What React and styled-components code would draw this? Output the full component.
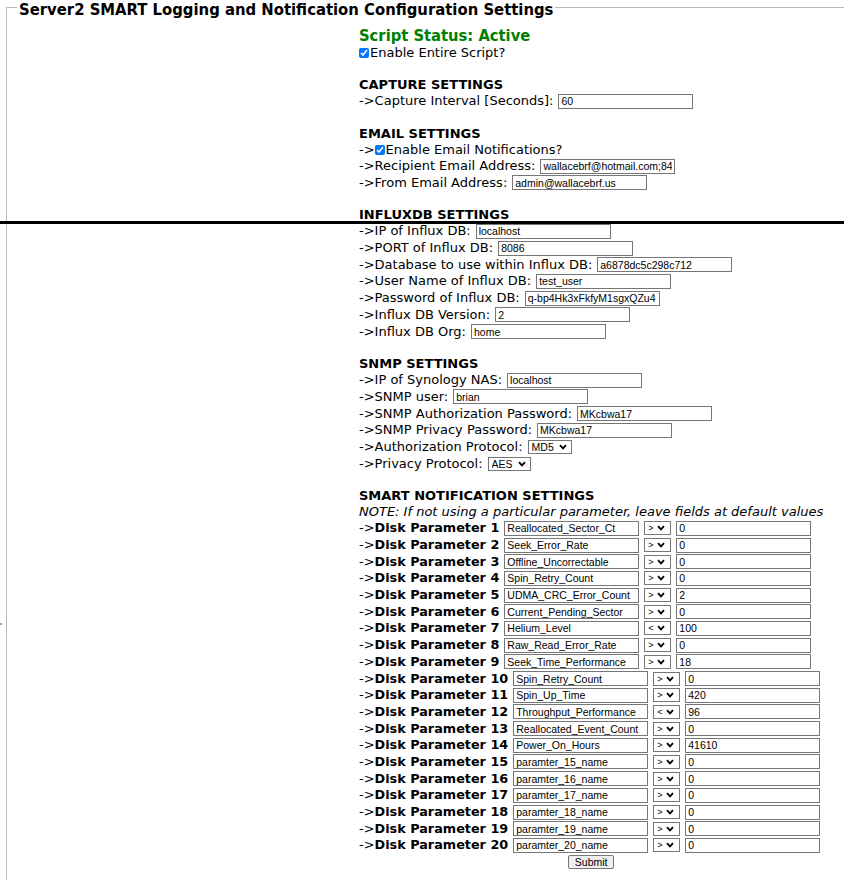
import React from 'react';
import styled, { createGlobalStyle } from 'styled-components';

const GlobalStyle = createGlobalStyle`
    html, body {
        margin: 0;
        padding: 0;
        overflow: hidden;
        background: #fff;
    }
    body {
        font-family: 'DejaVu Sans', Verdana, sans-serif;
        font-size: 13px;
        color: #000;
    }
`;

const Page = styled.div`
    position: relative;
    width: 844px;
    height: 880px;
    overflow: hidden;
`;
const Frame = styled.fieldset`
    margin: -4px -20px 0 6px;
    padding: 0 0 20px 0;
    border: 1px solid #b8b8b8;
    min-width: 0;
`;
const Legend = styled.legend`
    margin-left: 10px;
    padding: 6px 2px 0;
    font-family: 'DejaVu Sans Condensed', 'DejaVu Sans', sans-serif;
    font-size: 16.5px;
    line-height: 16px;
    font-weight: bold;
    white-space: nowrap;
`;
const Content = styled.div`
    display: flex;
    flex-direction: column;
    width: fit-content;
    margin-left: 352px;
`;
const Status = styled.div`
    margin-top: 8px;
    font-family: 'DejaVu Sans Condensed', 'DejaVu Sans', sans-serif;
    font-size: 16.4px;
    line-height: 19px;
    font-weight: bold;
    color: #008000;
`;
const Line = styled.div`
    display: flex;
    align-items: center;
    height: 16px;
    line-height: 16px;
    white-space: nowrap;
    margin-top: ${(props) => (props.$gap ? '16px' : '0')};
`;
const Heading = styled(Line)`
    font-weight: bold;
`;
const Note = styled(Line)`
    font-style: italic;
`;
const Row = styled.div`
    display: flex;
    align-items: center;
    gap: 5px;
    height: 16.7px;
    line-height: 16px;
    white-space: nowrap;
`;
const Label = styled.span``;
const Strong = styled.b`
    font-size: 12.8px;
`;
const Check = styled.input`
    width: 10px;
    height: 10px;
    margin: 0 1px 0 0;
`;
const TextInput = styled.input`
    box-sizing: border-box;
    width: 135px;
    height: 15px;
    padding: 0 2px;
    border: 1px solid #767676;
    border-radius: 0;
    font-family: 'Liberation Sans', Arial, sans-serif;
    font-size: 10.5px;
    color: #000;
    background: #fff;
    outline: none;
`;
const SelectBox = styled.span`
    display: inline-flex;
    align-items: center;
    gap: ${(props) => (props.$small ? '3px' : '4px')};
    box-sizing: border-box;
    height: 14px;
    padding: ${(props) => (props.$small ? '0 5px 0 3px' : '0 4px 0 3px')};
    border: 1px solid #767676;
    background: #fff;
`;
const NativeSelect = styled.select`
    appearance: none;
    border: none;
    background: transparent;
    padding: 0;
    margin: 0;
    font-family: 'Liberation Sans', Arial, sans-serif;
    font-size: ${(props) => (props.$small ? '9px' : '10.5px')};
    color: #000;
    outline: none;
`;
const SubmitRow = styled.div`
    display: flex;
    justify-content: center;
    align-items: center;
    height: 16.7px;
`;
const SubmitButton = styled.button`
    box-sizing: border-box;
    height: 14px;
    padding: 0 6px;
    border: 1px solid #767676;
    border-radius: 2px;
    background: #efefef;
    font-family: 'Liberation Sans', Arial, sans-serif;
    font-size: 10.5px;
    line-height: 12px;
    color: #000;
`;
const Divider = styled.div`
    position: absolute;
    left: 0;
    right: 0;
    top: 221px;
    height: 3px;
    background: #000;
    z-index: 2;
`;
const Speck = styled.div`
    position: absolute;
    left: 0;
    top: 623px;
    width: 2px;
    height: 2px;
    background: #8bc34a;
`;

function Chevron() {
    return (
        <svg width="8" height="6" viewBox="0 0 8 6">
            <path d="M1 1.2 L4 4.4 L7 1.2" fill="none" stroke="#000" strokeWidth="1.8" />
        </svg>
    );
}

function Dropdown({ value, options, small }) {
    return (
        <SelectBox $small={small}>
            <NativeSelect $small={small} defaultValue={value}>
                {options.map((o) => (
                    <option key={o} value={o}>
                        {o}
                    </option>
                ))}
            </NativeSelect>
            <Chevron />
        </SelectBox>
    );
}

function Field({ label, value }) {
    return (
        <Row>
            <Label>{'->' + label}</Label>
            <TextInput type="text" defaultValue={value} />
        </Row>
    );
}

const influx = [
    ['IP of Influx DB:', 'localhost'],
    ['PORT of Influx DB:', '8086'],
    ['Database to use within Influx DB:', 'a6878dc5c298c712'],
    ['User Name of Influx DB:', 'test_user'],
    ['Password of Influx DB:', 'q-bp4Hk3xFkfyM1sgxQZu4'],
    ['Influx DB Version:', '2'],
    ['Influx DB Org:', 'home'],
];

const snmp = [
    ['IP of Synology NAS:', 'localhost'],
    ['SNMP user:', 'brian'],
    ['SNMP Authorization Password:', 'MKcbwa17'],
    ['SNMP Privacy Password:', 'MKcbwa17'],
];

const params = [
    ['Reallocated_Sector_Ct', '>', '0'],
    ['Seek_Error_Rate', '>', '0'],
    ['Offline_Uncorrectable', '>', '0'],
    ['Spin_Retry_Count', '>', '0'],
    ['UDMA_CRC_Error_Count', '>', '2'],
    ['Current_Pending_Sector', '>', '0'],
    ['Helium_Level', '<', '100'],
    ['Raw_Read_Error_Rate', '>', '0'],
    ['Seek_Time_Performance', '>', '18'],
    ['Spin_Retry_Count', '>', '0'],
    ['Spin_Up_Time', '>', '420'],
    ['Throughput_Performance', '<', '96'],
    ['Reallocated_Event_Count', '>', '0'],
    ['Power_On_Hours', '>', '41610'],
    ['paramter_15_name', '>', '0'],
    ['paramter_16_name', '>', '0'],
    ['paramter_17_name', '>', '0'],
    ['paramter_18_name', '>', '0'],
    ['paramter_19_name', '>', '0'],
    ['paramter_20_name', '>', '0'],
];

export default function App() {
    return (
        <Page>
            <GlobalStyle />
            <Frame>
                <Legend>Server2 SMART Logging and Notification Configuration Settings</Legend>
                <Content>
                    <Status>Script Status: Active</Status>
                    <Line>
                        <Check type="checkbox" defaultChecked />
                        Enable Entire Script?
                    </Line>

                    <Heading $gap>CAPTURE SETTINGS</Heading>
                    <Field label="Capture Interval [Seconds]:" value="60" />

                    <Heading $gap>EMAIL SETTINGS</Heading>
                    <Line>
                        {'->'}
                        <Check type="checkbox" defaultChecked />
                        Enable Email Notifications?
                    </Line>
                    <Field label="Recipient Email Address:" value="wallacebrf@hotmail.com;84" />
                    <Field label="From Email Address:" value="admin@wallacebrf.us" />

                    <Heading $gap>INFLUXDB SETTINGS</Heading>
                    {influx.map(([l, v]) => (
                        <Field key={l} label={l} value={v} />
                    ))}

                    <Heading $gap>SNMP SETTINGS</Heading>
                    {snmp.map(([l, v]) => (
                        <Field key={l} label={l} value={v} />
                    ))}
                    <Row>
                        <Label>{'->Authorization Protocol:'}</Label>
                        <Dropdown value="MD5" options={['MD5', 'SHA']} />
                    </Row>
                    <Row>
                        <Label>{'->Privacy Protocol:'}</Label>
                        <Dropdown value="AES" options={['AES', 'DES']} />
                    </Row>

                    <Heading $gap>SMART NOTIFICATION SETTINGS</Heading>
                    <Note>NOTE: If not using a particular parameter, leave fields at default values</Note>
                    {params.map(([name, op, val], i) => (
                        <Row key={i}>
                            <Label>
                                {'->'}
                                <Strong>Disk Parameter {i + 1}</Strong>
                            </Label>
                            <TextInput type="text" defaultValue={name} />
                            <Dropdown small value={op} options={['>', '<', '=']} />
                            <TextInput type="text" defaultValue={val} />
                        </Row>
                    ))}
                    <SubmitRow>
                        <SubmitButton type="button">Submit</SubmitButton>
                    </SubmitRow>
                </Content>
            </Frame>
            <Divider />
            <Speck />
        </Page>
    );
}
